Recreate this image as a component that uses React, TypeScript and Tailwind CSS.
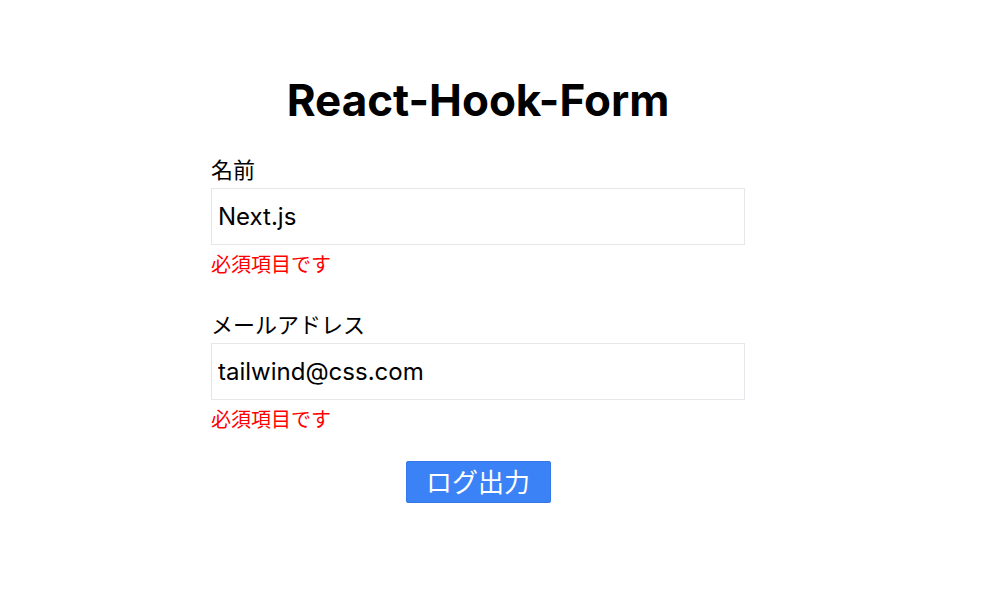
import { useState } from "react";

const font = "font-['Inter','Noto_Sans_CJK_JP',sans-serif]";

function Field({
  label,
  value,
  onChange,
}: {
  label: string;
  value: string;
  onChange: (v: string) => void;
}) {
  return (
    <div className="flex flex-col">
      <label className="text-[22px] leading-7 text-black">{label}</label>
      <input
        value={value}
        onChange={(e) => onChange(e.target.value)}
        className="mt-1 h-[57px] w-full border border-[#e5e7eb] px-[6px] text-2xl text-black outline-none"
      />
      <p className="mt-[6px] text-[20px] leading-7 text-[#ff0000]">必須項目です</p>
    </div>
  );
}

export default function App() {
  const [name, setName] = useState("Next.js");
  const [email, setEmail] = useState("tailwind@css.com");

  return (
    <div className={`min-h-[610px] w-full bg-white ${font}`}>
      <div className="ml-[211px] flex w-[534px] flex-col pt-[76px]">
        <h1 className="text-center text-[44px] leading-[48px] font-bold text-black">
          React-Hook-Form
        </h1>
        <form
          className="mt-[32px] flex flex-col"
          onSubmit={(e) => e.preventDefault()}
        >
          <Field label="名前" value={name} onChange={setName} />
          <div className="mt-[32px]">
            <Field label="メールアドレス" value={email} onChange={setEmail} />
          </div>
          <div className="mt-[27px] flex justify-center">
            <button
              type="submit"
              onClick={() => console.log({ name, email })}
              className="h-[42px] w-[145px] rounded-[2px] border border-[#3479e8] bg-[#3b82f6] text-[26px] text-white"
            >
              ログ出力
            </button>
          </div>
        </form>
      </div>
    </div>
  );
}
